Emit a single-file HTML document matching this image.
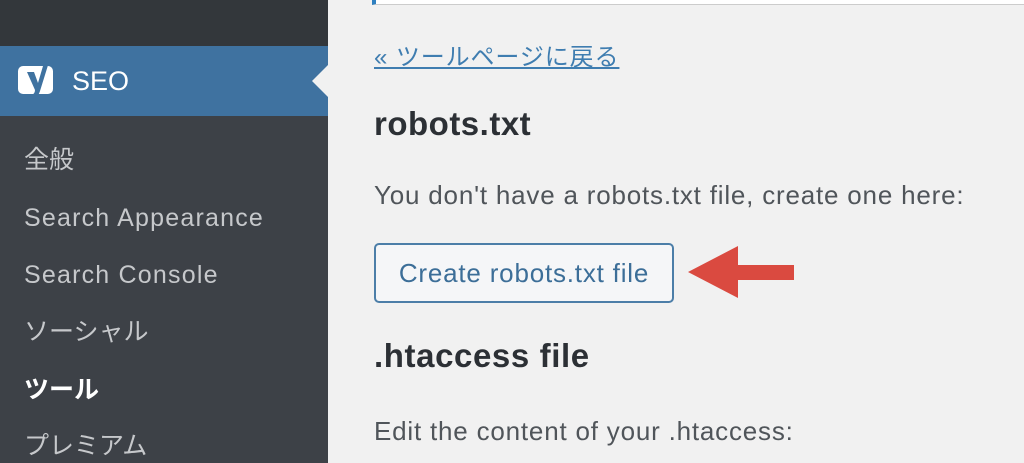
<!DOCTYPE html>
<html><head><meta charset="utf-8"><style>
*{margin:0;padding:0;box-sizing:border-box}
body{width:1024px;height:463px;overflow:hidden;background:#f1f1f1;font-family:"Liberation Sans","Noto Sans CJK JP",sans-serif;position:relative}
.sb{position:absolute;left:0;top:0;width:328px;height:463px;background:#3d4147}
.top{position:absolute;left:0;top:0;width:328px;height:46px;background:#33373b}
.seo{position:absolute;left:0;top:46px;width:328px;height:70px;background:#3f72a0}
.seo span{position:absolute;left:72px;top:20px;color:#fff;font-size:27px}
.notch{position:absolute;left:312px;top:65px;width:0;height:0;border-top:16px solid transparent;border-bottom:16px solid transparent;border-right:16px solid #f1f1f1}
.it{position:absolute;left:24px;color:#c6c8cb;font-size:25px;line-height:30px;letter-spacing:1.2px}
.j{letter-spacing:0}
.t{position:absolute;left:374px;color:#3b3f44}
.p{font-size:26px;letter-spacing:0.8px;color:#50555a}
.bar{position:absolute;left:372px;top:0;width:652px;height:5px;background:#fff;border-bottom:1px solid #ccc;border-left:4px solid #2f80c0}
</style></head><body>
<div class="sb"></div><div class="top"></div>
<div class="seo">
<svg style="position:absolute;left:17px;top:15px" width="38" height="40" viewBox="0 0 38 40"><rect x="1" y="5" width="35" height="28" rx="5" fill="#fff"/><path d="M10 11 L17 11 L21 22 L26 5 L32 1 L23 30 Q21 37 14 38 L14 34 Q18 33 18 29 Z" fill="#3f72a0"/></svg>
<span>SEO</span></div>
<div class="notch"></div>
<div class="it j" style="top:145px">全般</div>
<div class="it" style="top:203px">Search Appearance</div>
<div class="it" style="top:260px">Search Console</div>
<div class="it j" style="top:317px">ソーシャル</div>
<div class="it j" style="top:375px;color:#fff;font-weight:bold">ツール</div>
<div class="it j" style="top:431px">プレミアム</div>
<div class="bar"></div>
<div class="t" style="top:37px;font-size:24px;letter-spacing:0.9px;color:#3f7db0;text-decoration:underline">« ツールページに戻る</div>
<div class="t" style="top:105px;font-size:33px;letter-spacing:0.5px;font-weight:bold;color:#2c3035">robots.txt</div>
<div class="t p" style="top:180px">You don't have a robots.txt file, create one here:</div>
<div style="position:absolute;left:374px;top:243px;width:300px;height:60px;border:2px solid #4c7ea8;border-radius:5px;background:#f5f6f8;color:#3c6e98;font-size:26px;letter-spacing:0.8px;text-align:center;line-height:56px">Create robots.txt file</div>
<svg style="position:absolute;left:686px;top:244px" width="110" height="56"><path d="M2 28 L52 2 L52 21 L108 21 L108 36 L52 36 L52 54Z" fill="#da4a40"/></svg>
<div class="t" style="top:337px;font-size:33px;letter-spacing:0.6px;font-weight:bold;color:#2c3035">.htaccess file</div>
<div class="t p" style="top:416px">Edit the content of your .htaccess:</div>
</body></html>
